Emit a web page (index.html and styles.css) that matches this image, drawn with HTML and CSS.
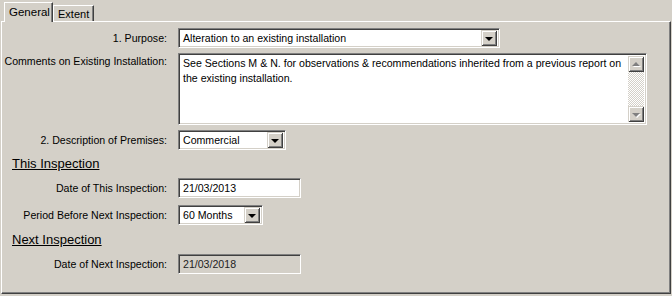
FILE: index.html
```html
<!DOCTYPE html>
<html lang="en">
<head>
    <meta charset="UTF-8">
    <title>Installation Details</title>
    <link rel="stylesheet" href="styles.css">
</head>
<body>
    <div class="tabs">
        <div class="tab active">General</div>
        <div class="tab">Extent</div>
    </div>

    <div class="panel">
        <div class="row row-purpose">
            <div class="label">1. Purpose:</div>
            <div class="combo combo-wide">
                <span class="combo-text">Alteration to an existing installation</span>
                <span class="drop-btn"><span class="arrow"></span></span>
            </div>
        </div>

        <div class="row row-comments">
            <div class="label">Comments on Existing Installation:</div>
            <div class="memo">
                <div class="memo-text">See Sections M &amp; N. for observations &amp; recommendations inherited from a previous report on the existing installation.</div>
                <div class="scrollbar">
                    <span class="scroll-btn"><span class="arrow up"></span></span>
                    <span class="scroll-track"></span>
                    <span class="scroll-btn"><span class="arrow"></span></span>
                </div>
            </div>
        </div>

        <div class="row row-premises">
            <div class="label">2. Description of Premises:</div>
            <div class="combo combo-premises">
                <span class="combo-text">Commercial</span>
                <span class="drop-btn"><span class="arrow"></span></span>
            </div>
        </div>

        <h3 class="section-title">This Inspection</h3>

        <div class="row row-date">
            <div class="label">Date of This Inspection:</div>
            <div class="edit">21/03/2013</div>
        </div>

        <div class="row row-period">
            <div class="label">Period Before Next Inspection:</div>
            <div class="combo combo-period">
                <span class="combo-text">60 Months</span>
                <span class="drop-btn"><span class="arrow"></span></span>
            </div>
        </div>

        <h3 class="section-title section-next">Next Inspection</h3>

        <div class="row row-next">
            <div class="label">Date of Next Inspection:</div>
            <div class="edit disabled">21/03/2018</div>
        </div>
    </div>
</body>
</html>
```

FILE: styles.css
```css
* {
    margin: 0;
    padding: 0;
    box-sizing: border-box;
}

body {
    width: 672px;
    height: 296px;
    overflow: hidden;
    background-color: #d4d0c8;
    font-family: "Liberation Sans", Arial, sans-serif;
    font-size: 10.6px;
    color: #000;
    padding: 2px 1px 0 1px;
}

/* Tab strip */
.tabs {
    display: flex;
    align-items: flex-end;
    height: 19px;
    padding-left: 3px;
    position: relative;
    z-index: 2;
}

.tab {
    width: 41px;
    height: 16px;
    padding: 1px 0 0 4px;
    border-top: 1px solid #fff;
    border-left: 1px solid #fff;
    border-right: 1px solid #404040;
    box-shadow: inset -1px 0 0 #808080;
    line-height: 14px;
    font-size: 11px;
}

.tab.active {
    width: 49px;
    height: 20px;
    margin-bottom: -1px;
    padding: 2px 0 0 4px;
    background-color: #d4d0c8;
    font-size: 11.5px;
    line-height: 15px;
}

/* Main page */
.panel {
    height: 273px;
    border-top: 1px solid #fff;
    border-left: 1px solid #fff;
    border-right: 1px solid #404040;
    border-bottom: 1px solid #404040;
    box-shadow: inset -1px -1px 0 #808080;
    padding-top: 6px;
}

.row {
    display: flex;
    align-items: center;
    margin-bottom: 5px;
}

.label {
    width: 165px;
    margin-right: 11px;
    text-align: right;
    white-space: nowrap;
}

.row-comments {
    align-items: flex-start;
}

.row-comments .label {
    padding-top: 2px;
}

/* Sunken controls */
.combo,
.edit,
.memo {
    height: 20px;
    background-color: #fff;
    border-top: 1px solid #808080;
    border-left: 1px solid #808080;
    border-right: 1px solid #fff;
    border-bottom: 1px solid #fff;
    box-shadow: inset 1px 1px 0 #404040, inset -1px -1px 0 #d4d0c8;
}

.combo {
    display: flex;
    align-items: center;
    padding: 2px;
}

.combo-text {
    flex: 1;
    padding-left: 2px;
    white-space: nowrap;
}

.combo-wide {
    width: 322px;
}

.combo-premises {
    width: 108px;
}

.combo-period {
    width: 85px;
}

.drop-btn,
.scroll-btn {
    width: 16px;
    height: 16px;
    display: flex;
    justify-content: center;
    align-items: center;
    background-color: #d4d0c8;
    box-shadow: inset 1px 1px 0 #d4d0c8, inset -1px -1px 0 #404040, inset 2px 2px 0 #fff, inset -2px -2px 0 #808080;
}

.arrow {
    width: 0;
    height: 0;
    border-left: 4px solid transparent;
    border-right: 4px solid transparent;
    border-top: 4px solid #000;
    margin-top: 1px;
}

.arrow.up {
    border-top: none;
    border-bottom: 4px solid #000;
    margin-top: -1px;
}

.scroll-btn .arrow {
    border-top-color: #808080;
    filter: drop-shadow(1px 1px 0 #fff);
}

.scroll-btn .arrow.up {
    border-bottom-color: #808080;
}

.memo {
    width: 469px;
    height: 72px;
    display: flex;
    padding: 2px;
}

.memo-text {
    flex: 1;
    padding: 0 0 0 2px;
    line-height: 15px;
}

.scrollbar {
    width: 16px;
    display: flex;
    flex-direction: column;
}

.scroll-track {
    flex: 1;
    background-color: #fff;
    background-image: repeating-conic-gradient(#d4d0c8 0 25%, #fff 0 50%);
    background-size: 2px 2px;
}

.edit {
    width: 123px;
    padding: 2px 0 0 4px;
    line-height: 14px;
}

.edit.disabled {
    background-color: #d4d0c8;
    color: #222;
}

/* Section headings */
.section-title {
    font-size: 13px;
    font-weight: normal;
    text-decoration: underline;
    margin: 7px 0 7px 10px;
    line-height: 14px;
}

.section-next {
    margin-top: 8px;
    margin-bottom: 7px;
}

.row-date {
    margin-bottom: 7px;
}
```
